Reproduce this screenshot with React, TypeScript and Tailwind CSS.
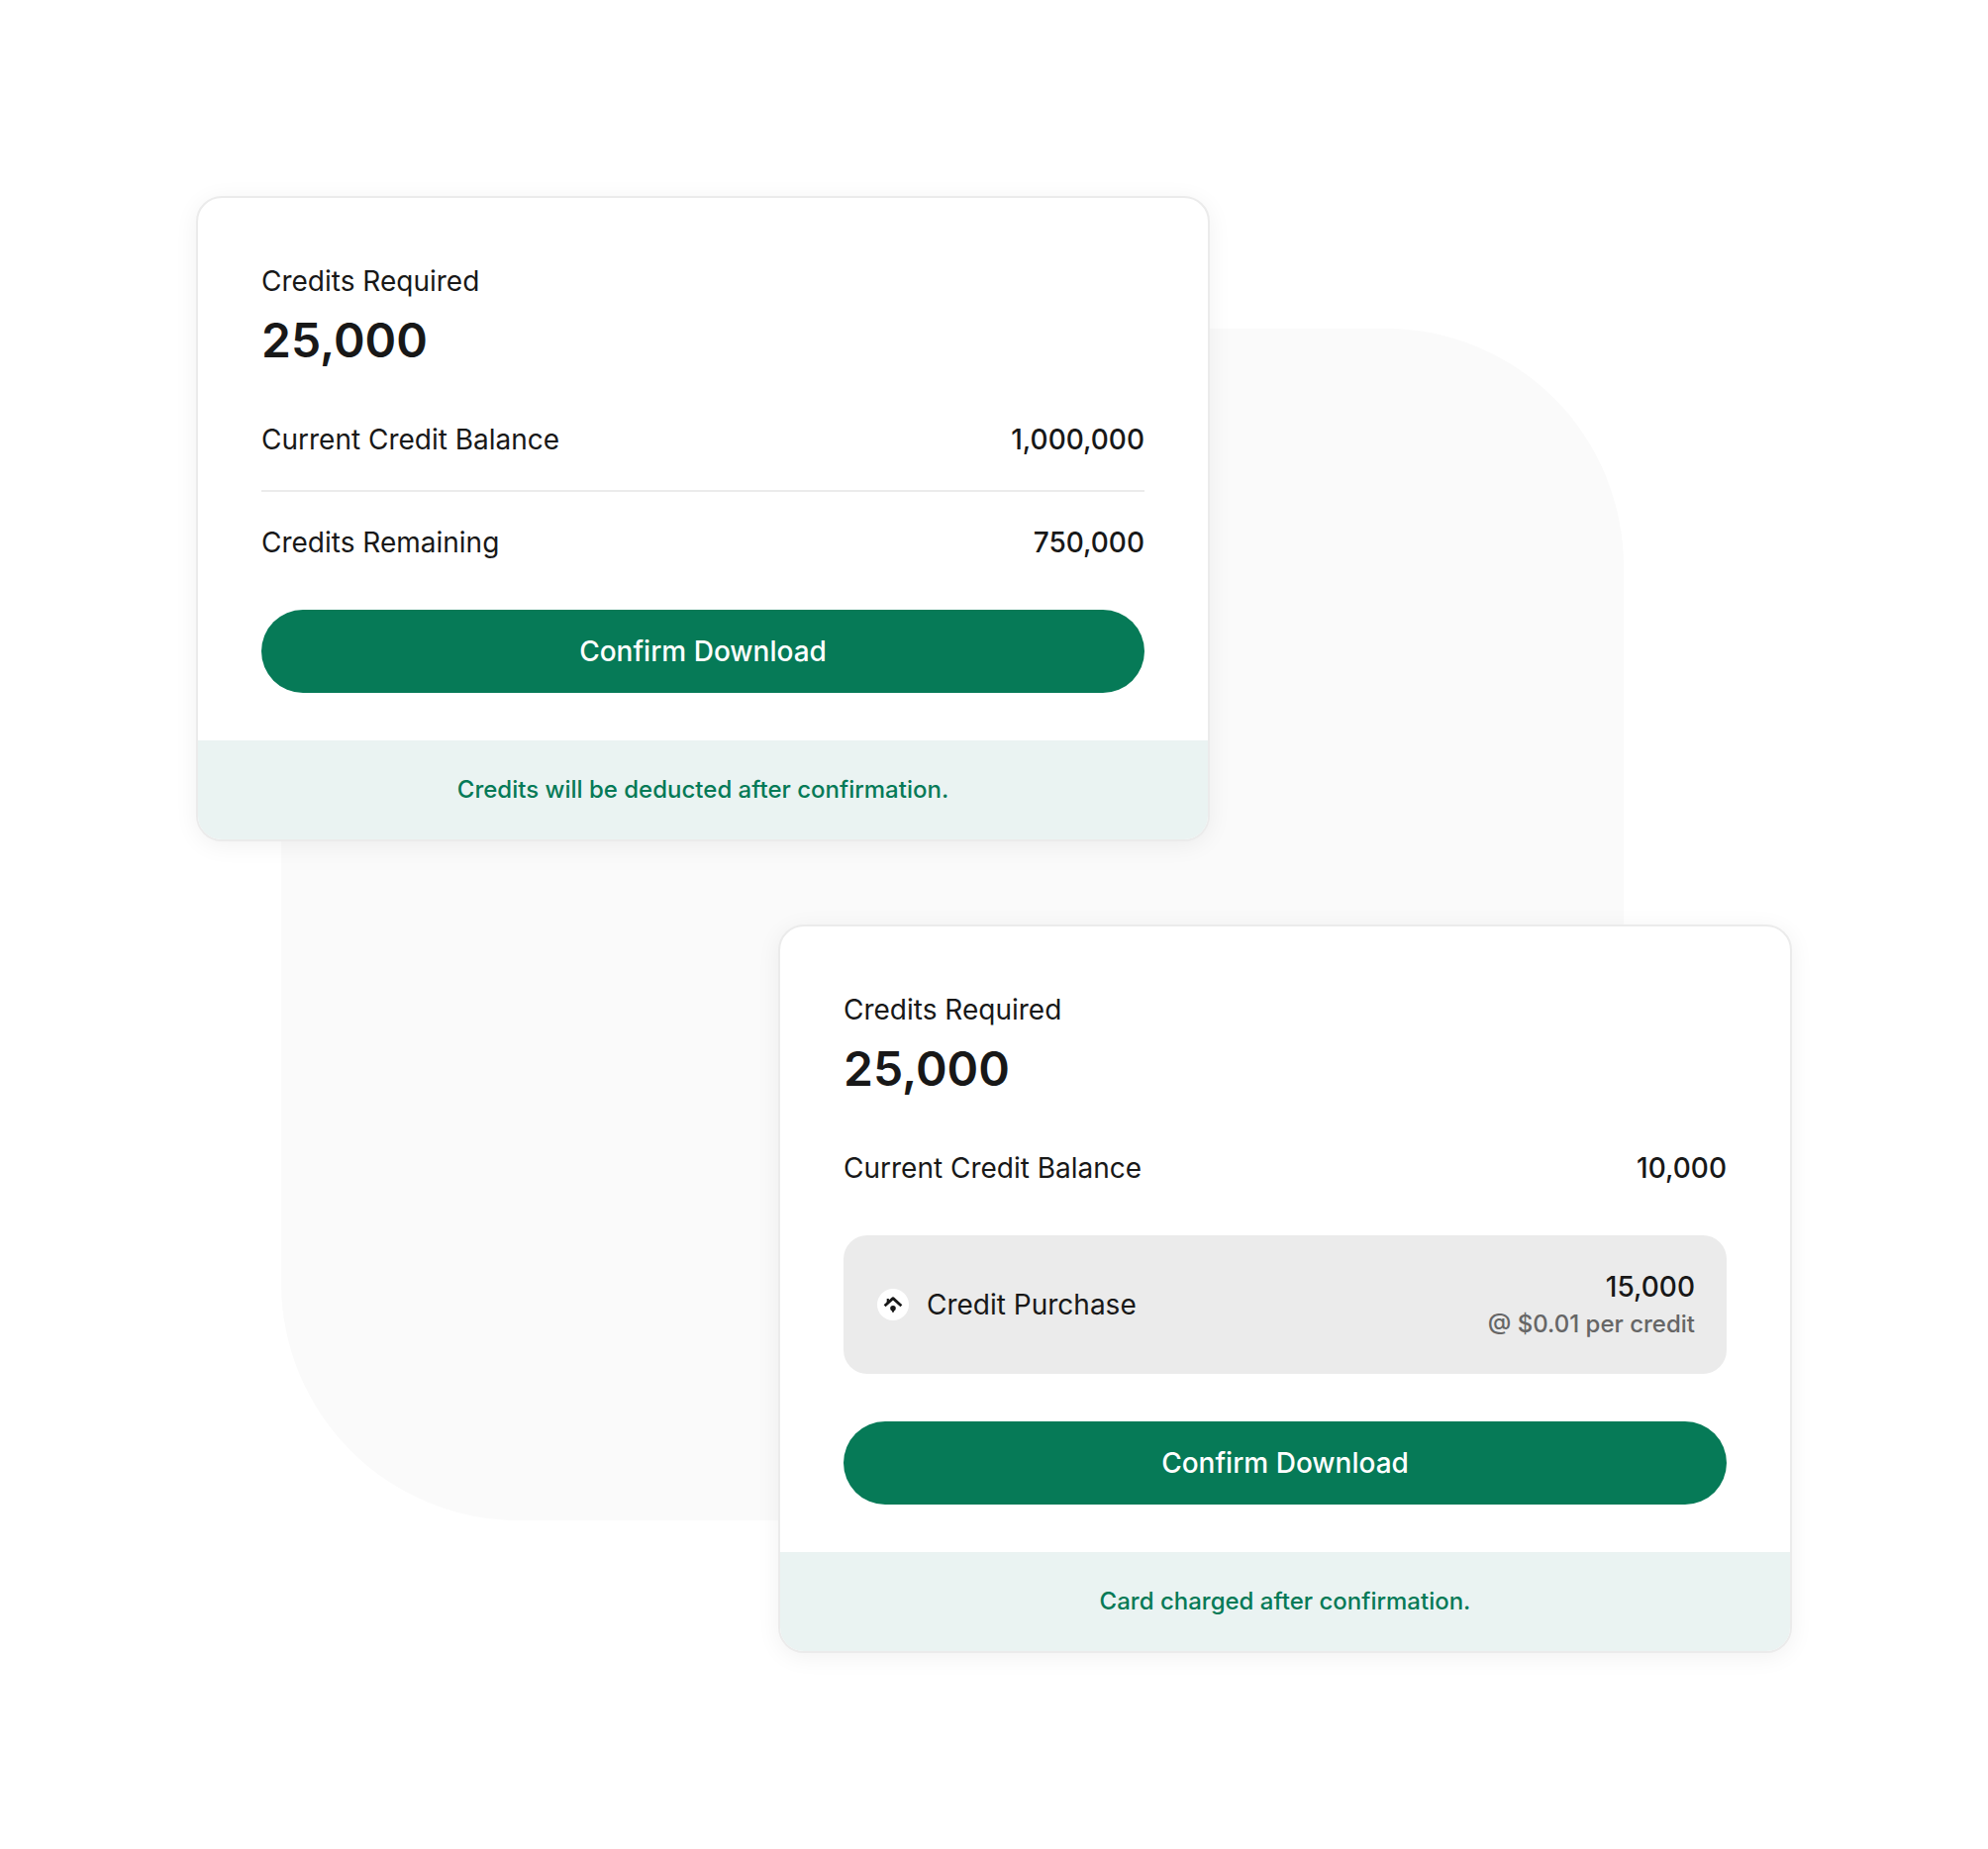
import React from 'react';

interface RowProps {
  label: string;
  value: string;
}

interface CreditCardProps {
  required: string;
  note: string;
  children: React.ReactNode;
}

function Row({ label, value }: RowProps) {
  return (
    <div className="flex items-center justify-between gap-4">
      <dt>{label}</dt>
      <dd className="font-medium">{value}</dd>
    </div>
  );
}

function HomeIcon() {
  return (
    <svg viewBox="0 0 36 36" className="size-9 shrink-0" aria-hidden="true">
      <circle cx="18" cy="18" r="16" fill="#fff" />
      <path
        d="M9.6 19.2 18 11.6l8.4 7.6"
        fill="none"
        stroke="#181818"
        strokeWidth="2.8"
        strokeLinecap="butt"
        strokeLinejoin="round"
      />
      <path d="M11.7 12h2.2v3l-2.2 2.2z" fill="#181818" />
      <path d="M18 19a2.8 2.8 0 0 1 2.8 2.8c0 1.2-.6 1.8-1.2 2.3-.4.4-.6.8-.7 1.2-.2.8-1.6.8-1.8 0-.1-.4-.3-.8-.7-1.2-.6-.5-1.2-1.1-1.2-2.3a2.8 2.8 0 0 1 2.8-2.8z" fill="#181818" />
    </svg>
  );
}

function CreditCard({ required, note, children }: CreditCardProps) {
  return (
    <section className="w-full max-w-[1024px] overflow-hidden rounded-[26px] border-2 border-[#ebebeb] bg-white shadow-[0_4px_24px_rgba(0,0,0,0.06)]">
      <div className="px-16 pt-16 pb-12">
        <h2>Credits Required</h2>
        <p className="mt-2 text-5xl leading-16 font-semibold">{required}</p>
        <dl className="mt-12">{children}</dl>
        <button
          type="button"
          className="mt-12 h-21 w-full cursor-pointer rounded-full bg-[#067a57] font-medium text-white"
        >
          Confirm Download
        </button>
      </div>
      <p className="bg-[#eaf3f2] px-16 py-8 text-center text-2xl leading-9 font-medium text-[#067a57]">{note}</p>
    </section>
  );
}

export default function App() {
  return (
    <main className="min-h-screen bg-white px-6 py-[198px] font-['Inter',sans-serif] text-[28px] leading-10 text-[#181818]">
      <div className="relative isolate mx-auto flex max-w-[1612px] flex-col gap-21">
        {/* backdrop behind both cards */}
        <div className="absolute top-[134px] right-[170px] bottom-[134px] left-[86px] -z-10 rounded-[240px] bg-[#fafafa]" />

        <CreditCard required="25,000" note="Credits will be deducted after confirmation.">
          <Row label="Current Credit Balance" value="1,000,000" />
          <div className="my-[31px] h-0.5 bg-[#ebebeb]" />
          <Row label="Credits Remaining" value="750,000" />
        </CreditCard>

        <div className="flex justify-end">
          <CreditCard required="25,000" note="Card charged after confirmation.">
            <Row label="Current Credit Balance" value="10,000" />
            <div className="mt-12 flex items-center justify-between gap-4 rounded-3xl bg-[#ebebeb] p-8">
              <dt className="flex items-center gap-4">
                <HomeIcon />
                Credit Purchase
              </dt>
              <dd className="text-right font-medium">
                15,000
                <span className="block text-2xl leading-9 text-[#666]">@ $0.01 per credit</span>
              </dd>
            </div>
          </CreditCard>
        </div>
      </div>
    </main>
  );
}
